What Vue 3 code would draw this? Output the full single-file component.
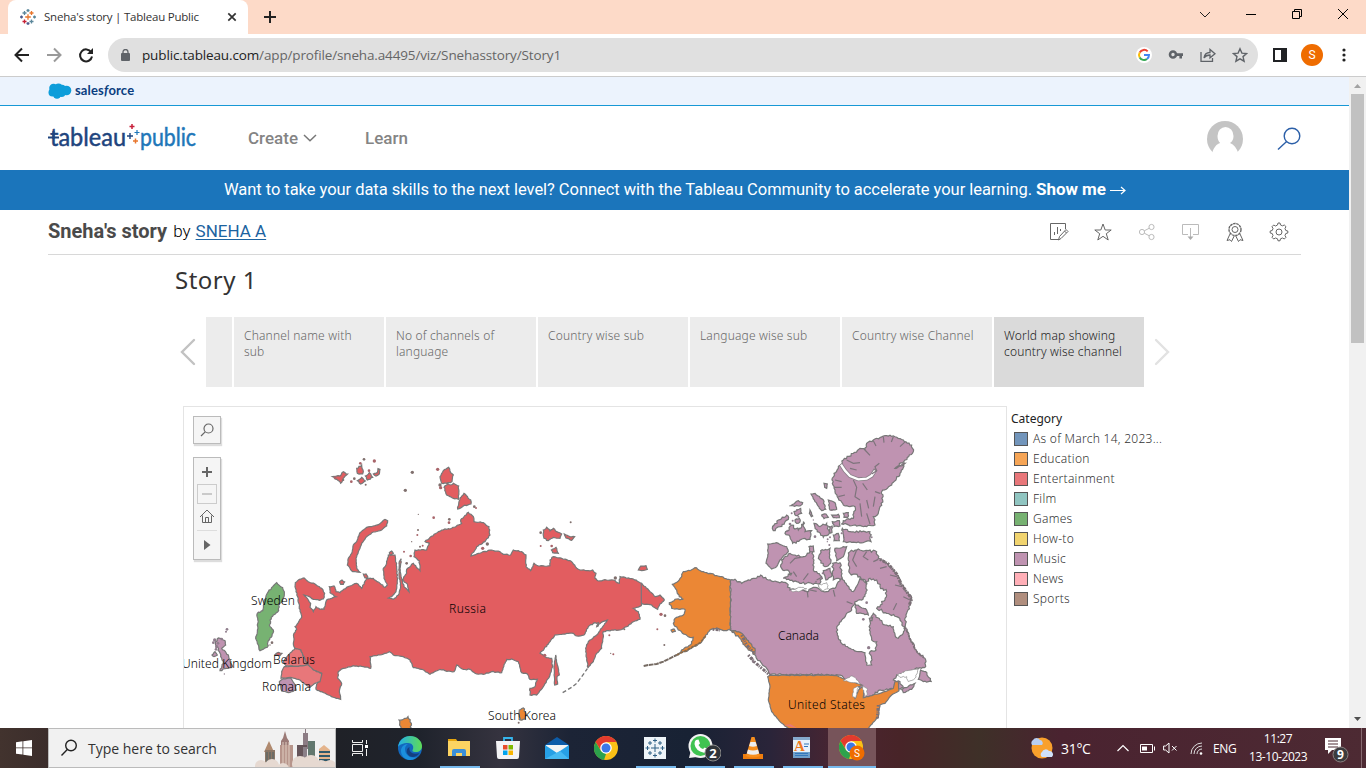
<script setup>
// Turns a coarse coastline into an irregular one by displacing points between its vertices.
function rough(src, amp = 2, seed = 7) {
  const n = src.trim().split(/\s+/).map((p) => p.split(',').map(Number))
  let s = seed
  const rnd = () => {
    s = (s * 1103515245 + 12345) % 2147483648
    return s / 2147483648 - 0.5
  }
  const out = []
  n.forEach((a, i) => {
    const b = n[(i + 1) % n.length]
    const dx = b[0] - a[0]
    const dy = b[1] - a[1]
    const len = Math.hypot(dx, dy) || 1
    const k = Math.max(1, Math.round(len / 5))
    out.push(a.join(','))
    for (let j = 1; j < k; j++) {
      const o = rnd() * 2 * amp
      out.push(`${(a[0] + (dx * j) / k - (dy / len) * o).toFixed(1)},${(a[1] + (dy * j) / k + (dx / len) * o).toFixed(1)}`)
    }
  })
  return 'M' + out.join('L') + 'Z'
}

const shapes = [
  // Russia
  { c: 'red', a: 1.5, p: '346,548 358,538 372,534 385,545 405,552 425,565 434,580 430,597 418,601 400,598 388,590 372,585 385,600 392,610 390,622 400,635 408,620 420,628 432,628 440,600 455,595 468,590 450,578 448,560 462,558 468,575 480,578 500,562 530,550 545,565 560,535 580,535 600,550 615,562 622,555 612,535 610,505 620,490 625,465 645,465 650,500 652,540 648,575 635,590 625,594 640,598 655,585 662,560 657,520 657,490 664,476 660,505 665,535 672,560 687,575 682,552 667,540 680,520 680,508 700,490 720,512 718,482 702,470 705,450 740,450 748,430 735,425 750,412 785,390 815,385 845,370 842,360 865,337 880,350 882,365 910,368 927,380 930,405 915,425 890,440 873,468 895,460 935,450 960,455 970,463 992,465 1000,450 1025,455 1038,465 1038,500 1052,512 1062,490 1075,498 1110,497 1110,480 1120,470 1145,475 1170,482 1180,492 1195,508 1220,512 1238,510 1248,520 1245,535 1255,543 1280,540 1300,540 1318,550 1320,530 1360,537 1385,550 1410,575 1425,590 1440,585 1453,600 1440,612 1433,628 1415,615 1385,610 1384,617 1360,625 1375,635 1380,658 1360,665 1340,680 1320,690 1295,690 1270,695 1268,720 1265,745 1250,760 1240,785 1224,803 1220,780 1217,745 1225,725 1250,705 1272,675 1282,660 1268,665 1250,680 1255,668 1240,670 1225,680 1212,705 1190,708 1180,700 1150,702 1125,705 1105,732 1080,760 1095,770 1115,775 1118,800 1110,825 1090,860 1070,885 1050,885 1050,865 1065,860 1072,838 1050,838 1042,822 1025,818 1015,785 995,777 980,778 975,790 965,818 935,815 910,823 885,820 870,808 850,808 830,795 822,815 795,812 780,808 750,823 725,808 700,803 690,780 670,770 640,765 628,755 600,765 570,770 572,805 550,800 520,797 490,805 475,815 473,835 485,850 478,875 482,898 465,893 440,883 408,868 412,850 425,820 400,810 385,795 368,765 362,750 345,745 340,730 342,700 350,688 345,680 365,652 358,620 353,590 345,560' },
  { c: 'red', a: 1, p: '623,362 615,358 595,374 575,380 560,382 540,398 530,425 520,435 515,460 505,475 502,495 518,515 540,517 530,505 528,475 535,455 545,430 560,410 580,396 605,390 620,378' },
  { c: 'red', a: 1.5, p: '785,250 780,230 790,212 806,202 812,218 820,225 816,245 800,250' },
  { c: 'red', a: 1.5, p: '792,262 803,250 812,255 820,250 836,258 835,298 820,295 800,285' },
  { c: 'red', a: 1.5, p: '833,327 840,295 852,280 872,300 873,312 850,318' },
  { c: 'red', a: 2, p: '1090,390 1100,382 1110,393 1120,385 1130,395 1145,402 1140,415 1120,412 1105,422 1092,415' },
  { c: 'red', a: 1, p: '1153,402 1170,410 1184,410 1175,421 1158,414' },
  { c: 'red', a: 1, p: '1114,450 1128,442 1135,460 1118,458' },
  { c: 'red', a: 1, p: '1375,510 1382,498 1398,497 1402,508 1385,512' },
  { c: 'red', a: 1, p: '1127,765 1131,790 1138,825 1131,830 1133,852 1124,855 1122,800' },
  { c: 'red', a: 1, p: '580,222 592,218 594,206 600,208 598,222 588,228' },
  { c: 'red', a: 2, p: '556,228 568,218 578,232 562,240' },
  { c: 'red', a: 3, p: '530,205 545,195 550,215 548,222 532,220' },
  { c: 'red', a: 2, p: '532,242 545,232 556,243 542,252' },
  { c: 'red', a: 2, p: '458,230 480,228 490,215 503,222 490,235 482,250 470,238' },
  { c: 'red', a: 1, p: '479,545 486,540 494,546 490,553 482,553' },
  { c: 'red', a: 1, p: '628,458 635,453 640,460 632,466' },
  { c: 'red', a: 1, p: '285,764 295,757 306,760 300,767' },
  { c: 'red', a: 1, p: '550,522 558,522 564,532 555,534' },
  // Europe
  { c: 'green', a: 2, p: '290,548 298,556 308,563 313,580 308,600 298,610 296,632 280,645 270,660 270,680 280,690 276,708 265,722 262,742 250,748 240,752 235,735 227,715 234,685 232,640 248,632 252,605 265,575 278,560' },
  { c: 'ent', a: 1, p: '325,765 345,745 362,750 368,765 383,793 370,797 350,799 318,797 310,785' },
  { c: 'ent', a: 1, p: '313,800 350,799 372,797 385,795 400,810 425,820 420,845 405,850 390,862 372,850 355,838 330,832 303,835 305,815' },
  { c: 'plum', a: 1, p: '298,845 310,836 332,834 345,855 348,870 325,878 305,873' },
  { c: 'plum', a: 2, p: '106,730 115,714 135,722 137,735 125,745 145,765 150,785 158,800 140,805 120,812 130,790 122,770 118,755' },
  { c: 'plum', a: 1, p: '96,765 105,755 112,765 102,770' },
  { c: 'orange', a: 2, p: '657,960 670,958 684,950 694,970 690,1000 665,1000' },
  { c: 'orange', a: 2, p: '1018,930 1030,924 1038,940 1036,957 1020,960' },
  // Canada
  { c: 'plum', a: 3, p: '1651,540 1665,538 1685,550 1705,540 1725,535 1742,525 1765,540 1790,545 1820,550 1830,570 1860,565 1880,575 1900,562 1940,575 1965,565 1975,545 1985,530 2000,555 2020,575 2032,555 2040,535 2060,550 2058,580 2045,600 2025,605 2015,630 2000,640 1985,660 1970,685 1972,705 1985,730 2010,745 2040,755 2055,758 2060,795 2075,795 2070,755 2088,750 2090,725 2075,720 2070,700 2070,665 2080,640 2100,660 2115,675 2140,680 2145,705 2155,715 2170,700 2175,680 2192,720 2210,755 2235,775 2237,800 2215,805 2180,815 2150,825 2140,840 2160,845 2170,865 2100,870 2070,890 2052,893 2045,875 2030,850 2015,848 1990,832 1970,824 1770,824 1760,805 1745,790 1720,762 1700,720 1680,700 1665,692 1651,690' },
  { c: 'plum', a: 4, p: '2005,480 2010,455 2035,447 2090,455 2095,475 2120,490 2150,520 2165,555 2195,595 2180,640 2175,680 2150,650 2120,640 2090,625 2115,600 2120,575 2100,560 2090,540 2070,535 2060,550 2040,530 2010,520' },
  { c: 'plum', a: 3, p: '1990,180 2020,160 2040,145 2055,150 2060,130 2080,120 2110,108 2140,108 2170,120 2195,135 2200,155 2175,180 2145,205 2175,190 2160,220 2135,255 2105,275 2108,300 2095,340 2080,350 2085,375 2060,380 2030,378 1985,372 1990,362 2020,355 2025,320 1995,318 1975,295 1965,275 1957,250 1962,220 1980,196' },
  { c: 'plum', a: 3, p: '1987,385 2010,395 2070,395 2073,425 2030,428 1990,425' },
  { c: 'plum', a: 1.5, p: '1763,432 1790,428 1820,440 1825,455 1800,480 1790,500 1775,507 1758,490 1765,460' },
  { c: 'plum', a: 3.5, p: '1805,480 1830,460 1860,470 1880,465 1895,445 1902,480 1900,510 1925,530 1920,550 1880,550 1840,545 1810,535 1835,520 1805,505' },
  { c: 'plum', a: 2, p: '1965,445 2000,440 1990,470 1970,482' },
  { c: 'plum', a: 3, p: '1958,490 1980,488 1987,535 1960,540' },
  { c: 'plum', a: 3, p: '1922,452 1950,445 1952,490 1935,500 1915,475' },
  { c: 'plum', a: 3, p: '1777,385 1795,360 1820,345 1825,358 1800,380 1780,392' },
  { c: 'plum', a: 2, p: '1828,318 1855,302 1868,308 1860,318' },
  { c: 'plum', a: 2, p: '1842,335 1862,325 1865,340 1848,347' },
  { c: 'plum', a: 2, p: '1893,282 1905,280 1930,300 1937,328 1925,332 1905,305' },
  { c: 'plum', a: 2, p: '1945,300 1965,308 1970,328 1950,330' },
  { c: 'plum', a: 4, p: '1815,400 1835,375 1855,390 1870,365 1875,395 1895,392 1890,418 1860,420 1838,430 1830,410' },
  { c: 'plum', a: 3, p: '1902,370 1920,380 1940,370 1948,400 1930,412 1912,395' },
  { c: 'plum', a: 2, p: '1957,365 1978,362 1980,378 1962,380' },
  { c: 'plum', a: 2, p: '1960,405 1975,400 1978,422 1962,422' },
  { c: 'plum', a: 2, p: '1955,345 1975,343 1978,353 1960,353' },
  { c: 'plum', a: 2, p: '1990,340 2005,338 2003,352 1992,352' },
  { c: 'plum', a: 1, p: '1932,250 1942,252 1940,265 1934,262' },
  { c: 'plum', a: 1, p: '1890,330 1898,348 1894,350 1888,340' },
  { c: 'plum', a: 1, p: '1887,440 1900,438 1902,455 1890,455' },
  { c: 'plum', a: 2, p: '2025,612 2060,630 2065,645 2045,640 2030,640' },
  { c: 'plum', a: 2, p: '2222,810 2237,815 2255,845 2230,845 2215,838' },
  { c: 'plum', a: 2, p: '2165,868 2205,850 2195,868 2170,878' },
  { c: 'plum', a: 1, p: '2068,655 2078,652 2076,662 2070,662' },
  { c: 'plum', a: 2, p: '1925,345 1938,342 1945,352 1932,356' },
  { c: 'plum', a: 2, p: '1845,360 1858,355 1860,366 1850,370' },
  { c: 'plum', a: 2, p: '1948,380 1956,378 1956,398 1950,400' },
  { c: 'plum', a: 2, p: '1930,512 1950,505 1955,530 1938,540' },
  // United States
  { c: 'orange', a: 2, p: '1651,540 1620,530 1590,520 1570,515 1545,503 1530,512 1510,515 1498,540 1477,553 1490,570 1498,590 1510,598 1490,597 1468,608 1475,625 1515,628 1510,645 1485,655 1480,670 1495,690 1530,712 1540,712 1535,730 1510,748 1490,765 1525,750 1560,730 1575,710 1590,690 1610,684 1630,692 1651,690' },
  { c: 'orange', a: 3, p: '1651,690 1685,700 1725,745 1725,762 1705,750 1680,715 1665,702' },
  { c: 'orange', a: 1, p: '1473,690 1482,687 1486,694 1477,697' },
  { c: 'orange', a: 1, p: '1770,826 1968,826 1995,838 2045,855 2030,865 2020,880 2025,895 2035,870 2048,858 2052,870 2050,893 2080,885 2100,880 2140,865 2145,845 2155,845 2157,872 2135,885 2115,910 2100,915 2095,950 2060,990 1830,990 1800,965 1775,935 1765,900 1770,860 1763,830' },
].map((s, i) => ({ c: s.c, d: rough(s.p, s.a, i * 97 + 11) }))

const dots = '552,178,4 583,183,5 697,217,5 773,208,5 676,271,5 514,245,4 523,236,4 567,212,4 557,254,3 541,190,4 490,240,3 465,233,4 715,343,2 761,353,4 714,390,3 712,405,3 695,425,2 672,455,3 680,490,4 692,468,4 720,440,3 728,437,3 808,358,4 807,368,4 780,255,5 782,263,5 883,320,4 888,324,3 1082,398,4 1082,438,3 1172,367,3 1115,438,4 922,432,5 908,445,5 1306,534,5 1288,706,3 1292,760,2 1300,763,3 1333,688,3 1432,688,3 1453,735,3 1443,643,5 1455,647,4 1094,766,5 1016,968,3 141,688,4 138,695,3 104,720,5 100,728,4 110,740,5 125,717,4 133,822,2 276,728,4 1851,330,3 1830,372,4 1822,392,3 1838,362,3 1905,410,4 1855,350,3 1900,360,2 1835,340,3 1948,435,3 1942,425,2 1928,520,3 1940,510,3 2075,412,3 2066,743,5 1715,775,5 1720,785,4 1950,412,3 1943,418,3 1955,330,3 1985,400,3 1992,412,2 1908,545,3 1918,558,3 2060,608,4 2050,658,4 270,735,2 114,730,4 108,748,4'.split(' ').map((d) => d.split(',').map(Number))
const dotFill = (x, i) => (x > 1500 || x < 200 ? '#8f7d8c' : i % 2 ? '#a8656a' : '#80706e')

const inlets = 'M2098,190L2085,200L2090,212L2075,222M2020,240L2030,262L2025,290L2040,300M2048,250L2062,270M2055,150L2070,166M2080,122L2088,138M2110,110L2112,128M2140,110L2134,126M2000,180L2020,190L2040,188M2010,205L2030,210M2176,125L2160,140M2175,188L2145,206M2060,300L2066,325M2085,290L2080,320M2040,310L2045,350M2060,340L2070,372M1965,240L1985,245M1962,262L1985,262M1975,290L1995,285M2100,280L2085,275M1830,490L1845,475L1862,472M1850,530L1840,515M1870,540L1885,520M1910,540L1925,532M2030,450L2018,480L2030,500M2060,455L2050,470L2065,480M2095,478L2080,485M2120,500L2100,505M2150,530L2130,525M2165,560L2145,555M2190,600L2170,590M2140,630L2150,610M1860,568L1882,575L1884,592M1890,570L1910,574M2000,605L2018,612M1960,570L1965,590'
const water = [
  '2150,825 2180,812 2215,808 2205,835 2185,845 2180,830 2160,832',
  '1990,842 2012,828 2020,830 2035,842 2042,852 2020,848',
  '2020,866 2034,858 2028,894 2018,890',
  '2047,858 2060,864 2062,884 2054,890',
  '1832,570 1860,562 1880,566 1860,574 1838,576',
  '1915,556 1940,548 1945,566 1925,572',
].map((p, i) => rough(p, 2, i * 31 + 5))

const labels = [
  ['Sweden', 251, 605, 44], ['Russia', 449, 613, 37], ['United Kingdom', 182, 668, 90],
  ['Belarus', 273, 664, 42], ['Romania', 262, 691, 49], ['South Korea', 488, 720, 68],
  ['Canada', 778, 640, 41], ['United States', 788, 709, 77],
]
const points = [['Channel name with', 'sub'], ['No of channels of', 'language'], ['Country wise sub', ''], ['Language wise sub', ''], ['Country wise Channel', ''], ['World map showing', 'country wise channel']]
const legend = [['As of March 14, 2023...', '#7295bb'], ['Education', '#f6a556'], ['Entertainment', '#e8777a'], ['Film', '#90c5c1'], ['Games', '#77b272'], ['How-to', '#f1d46f'], ['Music', '#bf93b1'], ['News', '#ffafb7'], ['Sports', '#b08e7e']]
</script>

<template>
  <div class="screen">
    <div class="tabstrip">
      <div class="tab">
        <svg class="fav" width="16" height="16" viewBox="0 0 16 16" fill="none" stroke-width="1.3">
          <path d="M8 5.2v5.6M5.2 8h5.6" stroke="#e8762d" /><path d="M4.5 2v4M2.5 4h4M11.5 10.500v4M9.500 12.500h4" stroke="#5b879b" />
          <path d="M11.500 2v4M9.500 4h4" stroke="#e8762d" /><path d="M4.500 10.500v4M2.500 12.500h4" stroke="#c72035" /><path d="M8 0v3M6.500 1.500h3M14.500 6.500v3M13 8h3" stroke="#59879b" /><path d="M8 13v3M6.500 14.500h3M1.500 6.500v3M0 8h3" stroke="#4e5b8c" />
        </svg>
        <span class="tabtitle">Sneha's story | Tableau Public</span>
        <svg class="tabx" width="10" height="10" viewBox="0 0 10 10"><path d="M1.300 1.300l7.400 7.400M8.700 1.300l-7.400 7.400" stroke="#333" stroke-width="1.700" /></svg>
      </div>
      <svg class="newtab" width="14" height="14" viewBox="0 0 14 14"><path d="M7 1v12M1 7h12" stroke="#222" stroke-width="2" /></svg>
      <div class="winbtns">
        <svg width="46" height="30" viewBox="0 0 46 30"><path d="M18 12l5 5 5-5" fill="none" stroke="#222" /></svg>
        <svg width="46" height="30" viewBox="0 0 46 30"><path d="M18 14.500h10" stroke="#000" /></svg>
        <svg width="46" height="30" viewBox="0 0 46 30"><path d="M18.500 11.500h7v7h-7zM20.500 11.500v-2h7v7h-2" fill="none" stroke="#000" /></svg>
        <svg width="46" height="30" viewBox="0 0 46 30"><path d="M18 9l10 10M28 9l-10 10" stroke="#000" /></svg>
      </div>
    </div>
    <div class="toolbar">
      <svg width="96" height="30" viewBox="0 0 96 30" fill="none" stroke-width="2">
        <path d="M29 15H16M22 8.500L15.500 15l6.500 6.500" stroke="#222" /><path d="M47 15h13M54 8.500l6.500 6.500-6.500 6.500" stroke="#9a9a9a" />
        <path d="M91.200 12.200A6 6 0 1 0 92 16.500" stroke="#222" /><path d="M93 8v6h-6z" fill="#222" />
      </svg>
      <div class="omni">
        <svg class="lock" width="9" height="12" viewBox="0 0 9 12"><rect y="4" width="9" height="8" rx="1" fill="#5f6368" /><path d="M2 5V3a2.500 2.500 0 0 1 5 0v2" fill="none" stroke="#5f6368" stroke-width="1.300" /></svg>
        <span class="url">public.tableau.com<i>/app/profile/sneha.a4495/viz/Snehasstory/Story1</i></span>
        <div class="omniicons">
          <svg width="16" height="16" viewBox="0 0 16 16" fill="none" stroke-width="2"><circle cx="8" cy="8" r="8" fill="#fff" /><path d="M11.700 4.400A5 5 0 0 0 3.700 5.500" stroke="#ea4335" /><path d="M3.700 5.500A5 5 0 0 0 3.700 10.500" stroke="#fbbc05" /><path d="M3.700 10.500A5 5 0 0 0 11 12" stroke="#34a853" /><path d="M11 12A5 5 0 0 0 13 8H8" stroke="#4285f4" /></svg>
          <svg width="16" height="16" viewBox="0 0 16 16"><circle cx="5" cy="7.500" r="3" fill="none" stroke="#5f6368" stroke-width="2.600" /><path d="M8 6.300h7v2.600h-1V11.500h-2.600V8.900H8z" fill="#5f6368" /></svg>
          <svg width="16" height="16" viewBox="0 0 16 16" fill="none" stroke="#5f6368" stroke-width="1.300"><path d="M1 5v9.300h11.500V11" /><path d="M4 11c.5-4 3-5.500 6-5.500V2.500l5 4.300-5 4V8c-3 0-4.500.8-6 3z" /></svg>
          <svg width="16" height="16" viewBox="0 0 16 16" fill="none" stroke="#5f6368" stroke-width="1.400"><path d="M8 1.800l1.900 4.300 4.700.4-3.600 3.100 1.100 4.600L8 11.800l-4.100 2.400L5 9.600 1.400 6.500l4.700-.4z" /></svg>
        </div>
      </div>
      <svg class="side" width="14" height="14" viewBox="0 0 14 14"><rect width="14" height="14" fill="#202124" /><rect x="2" y="2" width="6" height="10" fill="#fff" /></svg>
      <div class="ava">S</div>
      <svg class="more" width="4" height="14" viewBox="0 0 4 14" fill="#222"><circle cx="2" cy="2" r="1.600" /><circle cx="2" cy="7" r="1.600" /><circle cx="2" cy="12" r="1.600" /></svg>
    </div>

    <div class="view">
      <main class="page">
        <div class="sfbar">
          <svg width="24" height="16" viewBox="0 0 24 16" fill="#0d9dda"><circle cx="5.500" cy="5" r="4.300" /><circle cx="10.500" cy="4.500" r="3.900" /><circle cx="14" cy="5.500" r="3.700" /><circle cx="18.500" cy="7.500" r="4.800" /><circle cx="4.500" cy="9.500" r="4" /><circle cx="9" cy="11.500" r="4.200" /><circle cx="13.500" cy="10" r="4" /></svg>
          <span class="sf">sales<i>f</i>orce</span>
        </div>
        <header class="nav">
          <svg class="logo" width="150" height="50" viewBox="48 113 150 50">
            <g class="logotext"><text x="50" y="146" fill="#1f457e" textLength="76" lengthAdjust="spacingAndGlyphs">tableau</text><text x="140" y="146" fill="#1f77b9" textLength="56" lengthAdjust="spacingAndGlyphs">public</text></g>
            <path d="M48 137.500h11M53.500 131v8" stroke="#1f457e" stroke-width="2" />
            <path d="M127 136h6M130 133v6" stroke="#1f457e" stroke-width="1.400" /><path d="M129.500 126.500h5M132 124v5" stroke="#c8203a" stroke-width="1.500" /><path d="M134.500 132.500h5M137 130v5" stroke="#1f77b9" stroke-width="1.200" /><path d="M133 141h5M135.500 138.500v5" stroke="#e8762d" stroke-width="1.500" />
          </svg>
          <span class="navitem create">Create</span>
          <svg class="chev" width="14" height="8" viewBox="0 0 14 8"><path d="M1 1l6 5.800L13 1" fill="none" stroke="#777" stroke-width="1.500" /></svg>
          <span class="navitem learn">Learn</span>
          <svg class="user" width="36" height="36" viewBox="0 0 36 36"><circle cx="18" cy="18" r="18" fill="#c4c4c4" /><path d="M10.500 15a7.500 8.500 0 0 1 16 0c0 3-1 5.500-3.500 7 4 1.500 6.500 5 8.500 10.500V36H5.500v-5c1.500-4.500 4-8 7.700-9-1.700-1.500-2.700-4-2.700-7z" fill="#fff" /></svg>
          <svg class="find-site" width="24" height="24" viewBox="0 0 24 24" fill="none" stroke="#2b5fa8" stroke-width="1.400"><circle cx="15" cy="9" r="7.800" /><path d="M9.600 14.600L1 22.500" /></svg>
        </header>
        <div class="banner"><span>Want to take your data skills to the next level? Connect with the Tableau Community to accelerate your learning.</span><b>Show me</b><svg width="16" height="10" viewBox="0 0 16 10"><path d="M0 5.500h15M11 2l4 3.500L11 9" fill="none" stroke="#fff" stroke-width="1.200" /></svg></div>
        <div class="title">
          <h1>Sneha's story</h1><span class="by">by</span><a>SNEHA A</a>
          <div class="acts">
            <svg width="20" height="20" viewBox="0 0 20 20" stroke="#666"><path d="M10 17.500H1.500v-16h15V7M5.500 13v-3M8.500 12V5M11.500 9V7M9.500 18l1-3.500 6.500-7 2 2-7 7zM15.500 9l2 2" /></svg>
            <svg width="20" height="20" viewBox="0 0 20 20" stroke="#666"><path d="M10 2l2.200 6h6l-4.900 3.700 1.900 6.300-5.200-3.700L4.800 18l1.900-6.300L1.800 8h6z" /></svg>
            <svg width="20" height="20" viewBox="0 0 20 20" stroke="#bbb"><circle cx="5" cy="10" r="2.600" /><circle cx="14.500" cy="5" r="2.600" /><circle cx="14.500" cy="15" r="2.600" /><path d="M7.300 8.800l5-2.600M7.300 11.200l5 2.600" /></svg>
            <svg width="20" height="20" viewBox="0 0 20 20" stroke="#bbb"><path d="M7 12.500H1.500v-10h16v10H12M9.500 6v10" /><path d="M6.500 14.500h6l-3 3.500z" fill="#aaa" stroke="none" /></svg>
            <svg width="20" height="20" viewBox="0 0 20 20" stroke="#666"><circle cx="10" cy="7.500" r="3" /><circle cx="10" cy="7.500" r="6" stroke-dasharray="2.600 .6" stroke-width="1.400" /><path d="M5 12l-3 6.500 3-.8 1.500 1.800 2.700-5.500M15 12l3 6.500-3-.8-1.500 1.800-2.700-5.500" /></svg>
            <svg width="20" height="20" viewBox="0 0 20 20" stroke="#666"><circle cx="10" cy="10" r="3" /><path d="M8.500 3l.5-2h2l.5 2 2 .8L15.300 3l1.700 1.700-1 1.800.8 2 2 .5v2l-2 .5-.8 2 1 1.800-1.700 1.700-1.800-1-2 .8-.5 2H9l-.5-2-2-.8-1.800 1L3 15.300l1-1.800-.8-2-2-.5V9l2-.5.8-2-1-1.800L4.700 3l1.800 1z" /></svg>
          </div>
        </div>
        <section class="viz">
          <h2>Story 1</h2>
          <div class="story">
            <svg class="arr" width="16" height="28" viewBox="0 0 16 28"><path d="M14 2L2 14l12 12" stroke="#c2c2c2" stroke-width="2.400" fill="none" stroke-linecap="round" /></svg>
            <div class="pt stub"></div>
            <div v-for="(p, i) in points" :key="i" class="pt" :class="{ on: i === 5 }">{{ p[0] }}<br v-if="p[1]" />{{ p[1] }}</div>
            <svg class="arr next" width="16" height="28" viewBox="0 0 16 28"><path d="M2 2l12 12L2 26" stroke="#e2e2e2" stroke-width="2.400" fill="none" stroke-linecap="round" /></svg>
          </div>
          <div class="row">
            <div class="mapbox">
              <svg class="map" width="822" height="321" viewBox="184 407 822 321">
                <g transform="translate(180 400) scale(.33333)">
                  <path v-for="(s, i) in shapes" :key="i" :class="s.c" class="land" :d="s.d" />
                  <circle v-for="(d, i) in dots" :key="'d' + i" :cx="d[0]" :cy="d[1]" :r="d[2]" :fill="dotFill(d[0], i)" />
                  <path d="M1983,194L1995,212L2010,228L2035,238L2060,236L2075,227L2087,208" class="sound edge-line" />
                  <path d="M1983,194L1995,212L2010,228L2035,238L2060,236L2075,227L2085,212" class="sound" />
                  <path :d="inlets" class="fj" />
                  <path d="M1384,550V612" class="fj" />
                  <path d="M1391,798L1405,795L1430,792L1450,785L1470,775L1490,765" stroke="#756a62" stroke-width="6" fill="none" stroke-dasharray="14 2" />
                  <path d="M1490,765L1525,748L1560,728L1578,708" stroke="#8a6a48" stroke-width="5" fill="none" stroke-dasharray="9 3" />
                  <path d="M1148,878L1175,862L1190,850L1205,830L1222,806" stroke="#777" stroke-width="4" fill="none" stroke-dasharray="12 7" />
                  <path d="M1685,705L1700,735L1722,758M1705,765L1722,785L1740,800L1770,826" class="skerry" />
                  <path d="M2100,478L2125,492L2150,522L2162,550L2180,575L2195,597L2188,615" class="skerry" />
                  <path d="M2176,682L2192,720L2208,752L2233,775" class="skerry thin" />
                  <path d="M1598,688L1620,690M2095,915L2092,955" class="skerry" />
                  <path v-for="(w, i) in water" :key="'w' + i" :d="w" class="water" />
                  <path d="M1812,975L1832,973L1852,985Z" fill="#e8777a" />
                </g>
                <text v-for="l in labels" :key="l[0]" :x="l[1]" :y="l[2]" :textLength="l[3]">{{ l[0] }}</text>
              </svg>
              <div class="mbtn find"><svg width="14" height="14" viewBox="0 0 14 14" fill="none" stroke="#666" stroke-width="1.200"><circle cx="8.500" cy="5.500" r="4.500" /><path d="M5.200 8.800L1 13" /></svg></div>
              <div class="mbtn zoomer">
                <svg width="26" height="101" viewBox="194 458 26 101" fill="none" stroke="#666"><path d="M207 467v10M202 472h10" stroke-width="2" /><rect x="197.500" y="484.500" width="19" height="19" stroke="#ccc" /><path d="M202 494h10" stroke="#bbb" stroke-width="1.500" /><path d="M200 517l7-7 7 7M202.500 515.500v7h9v-7M205.500 522.500v-5h3v5" /><path d="M197 530.500h20" stroke="#ddd" /><path d="M204 540l6.500 5-6.500 5z" fill="#666" stroke="none" /></svg>
              </div>
            </div>
            <aside>
              <div class="cat">Category</div>
              <div v-for="l in legend" :key="l[0]" class="lg"><i :style="{ background: l[1] }"></i><span>{{ l[0] }}</span></div>
            </aside>
          </div>
        </section>
      </main>
      <div class="scroll">
        <svg width="17" height="17" viewBox="0 0 17 17"><path d="M5 11l3.500-4L12 11z" fill="#a3a3a3" /></svg>
        <div class="thumb"></div>
        <svg class="dn" width="17" height="17" viewBox="0 0 17 17"><path d="M5 6l3.500 4L12 6z" fill="#505050" /></svg>
      </div>
    </div>

    <footer class="task">
      <div class="start"><svg width="16" height="16" viewBox="0 0 16 16" fill="#fff"><path d="M0 2.200l6.500-.9v6.200H0zM7.300 1.200L16 0v7.500H7.300zM0 8.300h6.500v6.300L0 13.700zM7.300 8.300H16V16l-8.700-1.200z" /></svg></div>
      <div class="search">
        <svg width="18" height="18" viewBox="0 0 18 18" fill="none" stroke="#222" stroke-width="1.400"><circle cx="11" cy="6.500" r="5.300" /><path d="M7.300 10.500L1.500 16.500" /></svg>
        <span>Type here to search</span>
        <svg class="city" width="80" height="38" viewBox="256 729 80 38">
          <path d="M270 741l5 11h-10z" fill="#b08a6f" /><rect x="266" y="750" width="10" height="16" fill="#8b7767" /><path d="M268 752v14M271 752v14M274 752v14" stroke="#4c6468" />
          <path d="M286 731l2 7 2 3v27h-8v-27l2-3z" fill="#9b7a76" /><path d="M281 745h13v23h-13z" fill="#b7958b" /><path d="M284 742v26M287 742v26M290 742v26" stroke="#e0cdc0" />
          <rect x="304" y="733" width="5" height="16" fill="#8c7c84" /><path d="M306.500 729v5" stroke="#8c7c84" /><rect x="298" y="745" width="10" height="20" fill="#66555a" /><rect x="309" y="741" width="7" height="24" fill="#62776e" /><rect x="304" y="747" width="4" height="18" fill="#8b8088" />
          <path d="M320 749l5-4 6 5v17h-11z" fill="#e4b48c" /><path d="M320 752h11M320 756h11M320 760h11" stroke="#2f596b" stroke-width="2" />
          <g fill="#e6d9d1"><circle cx="262" cy="766" r="6" /><circle cx="273" cy="766" r="7" /><circle cx="284" cy="769" r="6" /><circle cx="301" cy="764" r="8" /><circle cx="312" cy="763" r="8" /><circle cx="322" cy="767" r="7" /><circle cx="331" cy="766" r="6" /></g>
        </svg>
      </div>
      <div class="ti view-tasks"><svg width="18" height="16" viewBox="0 0 18 16" fill="none" stroke="#eee"><path d="M1.500 4.500h10v7h-10zM1.500 0v2.500h10V0M1.500 16v-2.500h10V16M15.500 0v4M15.500 9v7" /><rect x="14" y="5" width="3" height="3" fill="#fff" stroke="none" /></svg></div>
      <div class="ti"><svg width="26" height="26" viewBox="0 0 26 26"><defs><linearGradient id="eg"><stop offset="0" stop-color="#23b0e8" /><stop offset="1" stop-color="#5fdc55" /></linearGradient></defs><circle cx="13" cy="13" r="12" fill="#1268bd" /><path d="M1 12C2 5 7 1 13 1c7 0 12 5 12 10 0 4-3 6-6 6-4 0-4-1-3-3 1-3-1-6-5-6-5 0-9 2-10 4z" fill="url(#eg)" /><path d="M8 14c0 6 5 10 12 8-3 3-6 3-8 3-5-1-8-5-8-9 0-4 3-7 7-7-2 1-3 3-3 5z" fill="#1b8fdd" /><path d="M12.500 12c-1 5 3 8 10 6-2 4-9 6-12 1-2-3 0-6 2-7z" fill="#143f80" /></svg></div>
      <div class="ti run"><svg width="22" height="20" viewBox="0 0 22 20"><path d="M0 1h8l2 3H0z" fill="#e5a50e" /><rect y="3" width="22" height="15" fill="#fcd462" /><path d="M4 18v-5q0-2 2-2h10q2 0 2 2v5h-4v-3H8v3z" fill="#3a8fd8" /></svg></div>
      <div class="ti"><svg width="24" height="24" viewBox="0 0 24 24"><path d="M8 5V2h8v3" fill="none" stroke="#35b5ec" stroke-width="1.800" /><path d="M0 5h24l-1 16q0 2-2 2H3q-2 0-2-2z" fill="#f3f3f5" /><path fill="#e74c2a" d="M7 9h4.500v4.500H7z" /><path fill="#7fba00" d="M12.500 9H17v4.500h-4.500z" /><path fill="#00a4ef" d="M7 14.500h4.500V19H7z" /><path fill="#f9b500" d="M12.500 14.500H17V19h-4.500z" /></svg></div>
      <div class="ti"><svg width="24" height="22" viewBox="0 0 24 22"><path d="M0 8l12-8 12 8v13H0z" fill="#0d5ca8" /><path d="M1 8h22v8H1z" fill="#f4f4f4" /><path d="M0 8l12 8 12-8v14H0z" fill="#27a0e6" /><path d="M0 22l15-8 9 8z" fill="#46b9f2" /></svg></div>
      <div class="ti"><svg width="24" height="24" viewBox="0 0 24 24"><circle cx="12" cy="12" r="12" fill="#fbc116" /><path d="M1.600 6A12 12 0 0 1 22.400 6H12L7 14.500z" fill="#e33b2e" /><path d="M1.600 6l5.400 9 5 3-2 6A12 12 0 0 1 1.600 6z" fill="#2ca24c" /><circle cx="12" cy="12" r="5.800" fill="#fff" /><circle cx="12" cy="12" r="4.500" fill="#3b78e7" /></svg></div>
      <div class="ti run"><svg width="22" height="22" viewBox="0 0 22 22" fill="none" stroke="#2f6085"><rect width="22" height="22" fill="#eef4f8" stroke="none" /><path d="M11 7v8M7 11h8M11 1.500v4M9 3.500h4M11 16.500v4M9 18.500h4M3.500 9v4M1.500 11h4M18.500 9v4M16.500 11h4M6 4v4M4 6h4M16 4v4M14 6h4M6 14v4M4 16h4M16 14v4M14 16h4" /></svg></div>
      <div class="ti run"><svg width="34" height="30" viewBox="0 0 34 30"><circle cx="13.500" cy="13" r="12" fill="#f4f4f4" /><path d="M2 25l2-8 6 7z" fill="#f4f4f4" /><circle cx="13.500" cy="13" r="10" fill="#3fc351" /><path d="M9 7l2.500-.5 1.500 4-1.500 1.500q1.500 3 4.500 4l1.700-1.500 3.300 2q-.5 3-4 3.200Q8.500 18 7.500 11 7.500 8 9 7z" fill="#fff" /><circle cx="26" cy="20" r="8" fill="#30353a" stroke="#8a8a8a" /><text x="26" y="24.500" class="badge">2</text></svg></div>
      <div class="ti run"><svg width="20" height="24" viewBox="0 0 20 24"><path d="M0 18h20l1 5H0z" fill="#ef7d0d" /><path d="M8.500 1h3L17 20q-7 3-14 0z" fill="#f78f1e" /><path d="M7.400 6h5.200l1.300 4q-4 1.500-7.800 0zM5 13.500q5 2 10 0l1.200 4q-6 2.500-12.400 0z" fill="#eee" /></svg></div>
      <div class="ti run"><svg width="18" height="22" viewBox="0 0 18 22"><rect width="17" height="21" fill="#e7f1fa" /><path d="M0 0h17v3H0z" fill="#85a9cc" /><path d="M0 15h17v6H0z" fill="#6f9fcb" /><text x="1" y="14" class="wp">A</text><path d="M11 7h5M11 9.500h4M2 16.500h13M2 18.500h13" stroke="#3477bb" /></svg></div>
      <div class="ti run act"><svg width="26" height="26" viewBox="0 0 26 26"><circle cx="12" cy="12" r="12" fill="#fbc116" /><path d="M1.600 6A12 12 0 0 1 22.400 6H12L7 14.500z" fill="#e33b2e" /><path d="M1.600 6l5.400 9 5 3-2 6A12 12 0 0 1 1.600 6z" fill="#2ca24c" /><circle cx="12" cy="12" r="5.800" fill="#fff" /><circle cx="12" cy="12" r="4.500" fill="#3b78e7" /><circle cx="18" cy="18" r="7.500" fill="#ef6c00" /><text x="18" y="21.500" class="badge s">S</text></svg></div>
      <div class="tray">
        <svg width="26" height="24" viewBox="0 0 26 24"><circle cx="13" cy="12" r="10.500" fill="#f9a02c" /><path d="M3 9a3.500 3.500 0 0 1 1-5 4 4 0 0 1 7 0 3 3 0 0 1 2 5z" fill="#b9cff2" /><path d="M13 21a3 3 0 0 1 0-5 4 4 0 0 1 7-1 3.500 3.500 0 0 1 3 6z" fill="#cfe0f8" /></svg>
        <span class="temp">31°C</span>
        <svg class="up" width="12" height="8" viewBox="0 0 12 8"><path d="M.5 7L6 1.500 11.500 7" fill="none" stroke="#fff" stroke-width="1.200" /></svg>
        <svg class="bat" width="15" height="9" viewBox="0 0 15 9"><path d="M.5.500h12v8H.5zM14.500 2.500v4" fill="none" stroke="#fff" /><path d="M2 2.500h5v4H2z" fill="#fff" /></svg>
        <svg class="spk" width="15" height="12" viewBox="0 0 15 12"><path d="M.6 4h2L6 1v10L2.600 8h-2zM9 4l4.500 4.500M13.500 4L9 8.500" fill="none" stroke="#fff" /></svg>
        <svg class="wifi" width="13" height="13" viewBox="0 0 13 13" fill="none" stroke="#ddd"><path d="M1 12A11 11 0 0 1 12 1M4 12a8 8 0 0 1 8-8M7 12a5 5 0 0 1 5-5" /><circle cx="11" cy="11.500" r="1.300" fill="#fff" stroke="none" /></svg>
        <span class="eng">ENG</span>
        <div class="clock">11:27<br />13-10-2023</div>
        <svg class="note" width="26" height="28" viewBox="0 0 26 28"><path d="M1 2h16v12H8l-4 4v-4H1z" fill="#fff" /><path d="M4 5h10M4 8h10M4 11h10" stroke="#4d2a33" /><circle cx="16.500" cy="18.500" r="7.500" fill="#3b3b3e" stroke="#8a8080" /><text x="16.500" y="22.500" class="badge n">9</text></svg>
        <div class="edge"></div>
      </div>
    </footer>
  </div>
</template>

<style>
html, body { margin: 0; overflow: hidden; }
</style>
<style scoped>
.screen { width: 1366px; height: 768px; display: flex; flex-direction: column; overflow: hidden; background: #fff; font-family: "Open Sans", sans-serif; }
.screen svg { flex: none; display: block; }
.tabstrip { height: 34px; flex: none; background: #fddac8; display: flex; align-items: center; }
.tab { margin-left: 8px; width: 240px; height: 34px; background: #fff; border-radius: 8px 8px 0 0; display: flex; align-items: center; }
.fav { margin-left: 12px; }
.tabtitle { margin: -2px 0 0 8px; width: 183px; font-size: 11.5px; letter-spacing: -.22px; color: #333; white-space: nowrap; }
.newtab { margin-left: 15px; }
.winbtns { margin-left: auto; display: flex; height: 34px; }
.toolbar { height: 42px; flex: none; display: flex; align-items: center; border-bottom: 1px solid #ccc; }
.omni { margin-left: 12px; width: 1137px; height: 34px; border-radius: 17px; background: #e0e0e0; display: flex; align-items: center; padding: 0 0 0 13px; }
.url { margin-left: 12px; font-size: 13.5px; letter-spacing: -.14px; color: #222; white-space: nowrap; }
.url i { font-style: normal; color: #666; }
.omniicons { margin-left: auto; margin-right: 10px; display: flex; gap: 16px; }
.side { margin-left: 15px; }
.ava { margin-left: 14px; width: 22px; height: 22px; border-radius: 50%; background: #ef6c00; color: #fff; font: 12px/22px Roboto, sans-serif; text-align: center; }
.more { margin-left: 19px; }
.view { flex: 1; min-height: 0; display: flex; overflow: hidden; }
.page { width: 1349px; overflow: hidden; }
.sfbar { height: 28px; background: #ecf3fd; border-bottom: 1px solid #1798d5; display: flex; align-items: center; padding-left: 48px; }
.sf { margin: -2px 0 0 3px; font: 700 13px Lato, sans-serif; letter-spacing: .15px; color: #0a3d80; }
.nav { height: 64px; display: flex; align-items: center; padding-left: 48px; }
.logotext { font: 400 25px Lato, sans-serif; stroke-width: .5; }
.logotext text:first-child { stroke: #1f457e; }
.logotext text:last-child { stroke: #1f77b9; }
.navitem { font: 500 17px Roboto, sans-serif; color: #848484; white-space: nowrap; }
.create { margin-left: 50px; width: 55px; }
.learn { margin-left: 48px; }
.user { margin: 1px 34px 0 auto; }
.find-site { margin: 1px 48px 0 0; }
.banner { height: 40px; background: #1b75bb; color: #fff; font: 16.500px/39px Roboto, sans-serif; letter-spacing: -.045px; display: flex; align-items: flex-start; white-space: nowrap; padding-left: 224px; }
.banner b { margin: 0 4px; font-size: 17px; line-height: 38px; }
.banner svg { margin-top: 15px; }
.title { height: 44px; margin: 0 48px; border-bottom: 1px solid #d8d8d8; display: flex; align-items: center; font-family: Roboto, sans-serif; }
.title > h1, .title > a, .title > .by { margin-top: -2px; }
h1 { margin: 0; font-size: 20px; font-weight: 700; color: #4a4a4a; }
.by { font-size: 17px; margin-left: 6px; font-weight: 300; }
.title a { font-size: 17px; margin-left: 5px; color: #1c63a0; text-decoration: underline; text-underline-offset: 2px; }
.acts { margin-left: auto; margin-right: 12px; display: flex; gap: 24px; }
.acts svg { fill: none; }
.viz { font-family: "Noto Sans", "Open Sans", sans-serif; font-weight: 300; }
h2 { margin: 0; padding: 7px 0 0 175px; height: 55px; font-size: 24px; letter-spacing: .5px; line-height: 36px; font-weight: 400; color: #333; }
.story { display: flex; padding-left: 180px; height: 70px; }
.arr { margin: 21px 10px 0 0; }
.arr.next { margin-left: 8px; }
.pt { width: 130px; height: 59px; padding: 11px 10px 0; margin-right: 2px; background: #ececec; color: #686868; font-size: 12px; letter-spacing: .17px; line-height: 16px; white-space: nowrap; }
.pt.stub { width: 26px; padding: 11px 0 0; }
.pt.on { background: #dadada; color: #222; }
.row { display: flex; margin-top: 19px; padding-left: 183px; }
.mapbox { position: relative; width: 822px; height: 360px; border: 1px solid #e4e4e4; }
.land { stroke: #777; stroke-width: 3.600; }
.red { fill: #e25d60; }
.ent { fill: #e8777a; }
.green { fill: #77b272; }
.plum { fill: #bf93b1; }
.orange { fill: #eb8735; }
.fj { fill: none; stroke: #7e747c; stroke-width: 3.600; }
.sound { fill: none; stroke: #fff; stroke-width: 7; }
.sound.edge-line { stroke: #8a8088; stroke-width: 12; }
.skerry { fill: none; stroke: #7b6f76; stroke-width: 9; stroke-dasharray: 5 4 9 2 3 3; }
.skerry.thin { stroke-width: 5; }
.water { fill: #fff; stroke: #888; stroke-width: 2; }
.map text { font: 300 12px "Noto Sans", sans-serif; fill: #000; }
.mbtn { position: absolute; left: 9px; width: 26px; background: #f5f5f5; border: 1px solid #bbb; box-shadow: 1px 2px 1px #ddd; }
.find { top: 9px; height: 26px; display: grid; place-items: center; }
.zoomer { top: 50px; height: 101px; }
aside { margin-left: 4px; font-size: 12px; color: #333; padding-top: 3px; }
.cat { height: 20px; line-height: 20px; font-weight: 400; color: #222; }
.lg { height: 20px; display: flex; align-items: center; white-space: nowrap; letter-spacing: .27px; }
.lg i { width: 12px; height: 12px; border: 1px solid #555; margin: 0 5px 0 3px; }
.lg span { margin-top: -2px; }
.scroll { width: 17px; background: #f1f1f1; display: flex; flex-direction: column; }
.thumb { width: 13px; height: 249px; margin: 0 2px; background: #c1c1c1; }
.dn { margin-top: auto; }
.task { height: 40px; flex: none; display: flex; background: linear-gradient(90deg, #42332e 0, #3b2d2b 48px, #1f2127 336px, #1f232c 420px, #35333f 500px, #1c2436 570px, #182234 690px, #2a2439 770px, #4b2531 840px, #482428 900px, #3e3028 980px, #4a2330 1060px, #4d2a33 1366px); }
.start { width: 48px; display: grid; place-items: center; }
.search { width: 286px; border: 1px solid #bbb; background: #f1f1f1; display: flex; align-items: center; }
.search > svg:first-child { margin-left: 11px; }
.search span { margin-left: 10px; font-size: 14px; color: #333; white-space: nowrap; }
.city { margin-left: auto; }
.ti { width: 40px; padding: 0 4px 0 5px; height: 40px; display: grid; place-items: center; box-sizing: content-box; }
.view-tasks { padding: 0 5px 0 4px; }
.run { position: relative; }
.run::after { content: ""; position: absolute; left: 6px; width: 40px; height: 2px; bottom: 0; background: #76b9ed; }
.act { background: #77545a; padding: 0 4px; margin-left: 2px; }
.act::after { left: 0; width: 48px; }
.badge { font: 700 13px "Open Sans", sans-serif; fill: #fff; text-anchor: middle; letter-spacing: 0; }
.badge.s { font: 10px Roboto, sans-serif; }
.badge.n { font-size: 12px; }
.wp { font: 700 15px "Liberation Serif", serif; fill: #f07a1d; }
.tray { margin-left: auto; display: flex; align-items: center; color: #fff; width: 337px; font-size: 14px; letter-spacing: -.3px; }
.temp { width: 56px; margin-left: 6px; }
.bat { margin-left: 11px; }
.spk { margin-left: 8px; }
.wifi { margin-left: 12px; }
.eng { margin-left: 10px; font-size: 12px; width: 36px; }
.clock { width: 58px; font-size: 12px; letter-spacing: -.45px; line-height: 18px; text-align: center; white-space: nowrap; }
.note { margin: 3px 0 0 17px; }
.edge { margin-left: auto; margin-right: 4px; width: 1px; height: 40px; background: #85696f; }
</style>
